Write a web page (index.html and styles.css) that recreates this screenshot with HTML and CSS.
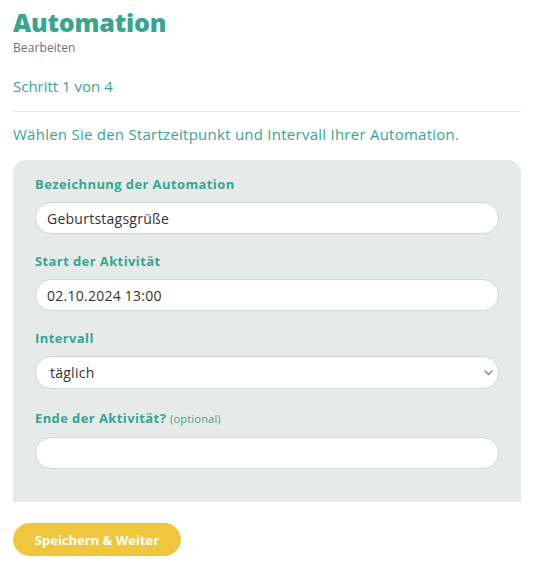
FILE: index.html
```html
<!DOCTYPE html>
<html lang="de">
<head>
<meta charset="utf-8">
<title>Automation</title>
<link rel="stylesheet" href="styles.css">
</head>
<body>
<div class="page">
  <header class="head">
    <h1 class="title">Automation</h1>
    <div class="subtitle">Bearbeiten</div>
  </header>
  <div class="step">Schritt 1 von 4</div>
  <hr class="divider">
  <p class="intro">Wählen Sie den Startzeitpunkt und Intervall Ihrer Automation.</p>
  <form class="panel">
    <div class="field">
      <label class="label">Bezeichnung der Automation</label>
      <input class="input" type="text" value="Geburtstagsgrüße">
    </div>
    <div class="field">
      <label class="label">Start der Aktivität</label>
      <input class="input" type="text" value="02.10.2024 13:00">
    </div>
    <div class="field">
      <label class="label">Intervall</label>
      <div class="select">
        <span class="select-value">täglich</span>
        <svg class="chevron" width="9" height="6" viewBox="0 0 9 6"><path d="M1 1l3.5 3.5L8 1" fill="none" stroke="#7a7e81" stroke-width="1.2" stroke-linecap="round" stroke-linejoin="round"/></svg>
      </div>
    </div>
    <div class="field field-last">
      <label class="label">Ende der Aktivität? <span class="optional">(optional)</span></label>
      <input class="input" type="text" value="">
    </div>
  </form>
  <button class="btn" type="button">Speichern &amp; Weiter</button>
</div>
</body>
</html>
```
FILE: styles.css
```css
* { box-sizing: border-box; }
html, body { margin: 0; padding: 0; background: #fff; }
body { font-family: "Open Sans", "DejaVu Sans", sans-serif; color: #3aa58f; }
.page { padding: 8px 18px 0 13px; }
.head { display: flex; flex-direction: column; }
.title { margin: 0; font-size: 25px; line-height: 29px; font-weight: 800; color: #3aa58f; letter-spacing: -0.2px; }
.subtitle { margin-top: 3px; font-size: 12px; line-height: 15px; color: #707070; letter-spacing: 0.1px; }
.step { margin-top: 21px; font-size: 15px; line-height: 20px; color: #3aa58f; }
.divider { margin: 15px 0 0; border: 0; border-top: 1.5px solid #e5e7e7; }
.intro { margin: 12px 0 0; font-size: 15px; line-height: 20px; color: #3aa58f; letter-spacing: 0.25px; }
.panel { margin-top: 16px; background: #e6eae9; border-radius: 13px 13px 0 0; padding: 15px 22px 33px; display: flex; flex-direction: column; gap: 18px; }
.field { display: flex; flex-direction: column; gap: 9px; }
.field-last { margin-top: 2px; }
.label { font-size: 13px; line-height: 18px; font-weight: 700; color: #3aa58f; letter-spacing: 0.4px; }
.optional { font-size: 11px; font-weight: 400; color: #3aa58f; letter-spacing: 0.2px; }
.input, .select { height: 32px; border: 1px solid #d2d6d9; border-radius: 16px; background: #fff; padding: 0 11px; font-family: inherit; font-size: 14px; letter-spacing: 0.25px; color: #333; width: 100%; outline: none; }
.select { height: 33px; display: flex; align-items: center; justify-content: space-between; padding: 0 5px 0 14px; }
.select-value { font-size: 14px; color: #333; }
.btn { margin-top: 21px; width: 168px; height: 33px; border: 1px solid #ecc240; border-radius: 17px; background: #f0c63e; color: #fff; font-family: inherit; font-size: 13px; font-weight: 700; letter-spacing: 0; }
```
